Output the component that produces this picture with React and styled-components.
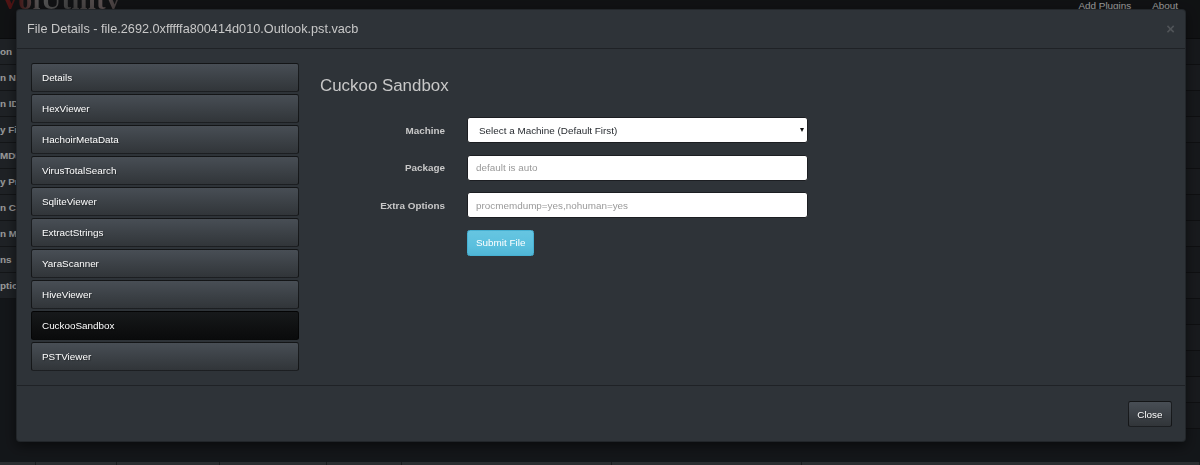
import React from "react";
import styled, { createGlobalStyle } from "styled-components";

const plugins = [
  "Details",
  "HexViewer",
  "HachoirMetaData",
  "VirusTotalSearch",
  "SqliteViewer",
  "ExtractStrings",
  "YaraScanner",
  "HiveViewer",
  "CuckooSandbox",
  "PSTViewer",
];

// what is left visible of the session table behind the modal
const sessionFields = [
  "on",
  "n Name",
  "n ID",
  "y File",
  "MD5",
  "y Profile",
  "n Created",
  "n Modified",
  "ns",
  "ption",
];

const GlobalStyle = createGlobalStyle`
  * {
    box-sizing: border-box;
  }
  html,
  body {
    margin: 0;
    height: 100%;
    overflow: hidden;
  }
  body {
    background: #21252a;
    color: #c8c8c8;
    font-family: "Liberation Sans", Arial, sans-serif;
    font-size: 9.9px;
  }
`;

const App = () => {
  return (
    <>
      <GlobalStyle />
      <Page>
        <Navbar>
          <Brand>
            <BrandText>VolUtility</BrandText>
          </Brand>
          <NavLinks>
            <NavLink>Add Plugins</NavLink>
            <NavLink>About</NavLink>
          </NavLinks>
        </Navbar>
        <Content>
          <Sidebar>
            {sessionFields.map((field) => (
              <SideRow key={field}>{field}</SideRow>
            ))}
          </Sidebar>
          <Main>
            {Array.from({ length: 15 }).map((_, i) => (
              <TableRow key={i} $odd={i % 2 === 1} />
            ))}
          </Main>
        </Content>
        <BottomBar>
          {[36, 81, 103, 107, 75, 210, 190, 398].map((w, i) => (
            <BottomCell key={i} style={{ width: w }} />
          ))}
        </BottomBar>
      </Page>

      <Backdrop />

      <ModalDialog>
        <ModalHeader>
          <ModalTitle>File Details - file.2692.0xfffffa800414d010.Outlook.pst.vacb</ModalTitle>
          <CloseX>×</CloseX>
        </ModalHeader>

        <ModalBody>
          <PluginList>
            {plugins.map((name) => (
              <PluginItem key={name} $active={name === "CuckooSandbox"}>
                {name}
              </PluginItem>
            ))}
          </PluginList>

          <Panel>
            <Heading>Cuckoo Sandbox</Heading>
            <Form>
              <Label>Machine</Label>
              <SelectWrap>
                <Select defaultValue="">
                  <option value="">Select a Machine (Default First)</option>
                </Select>
                <Caret />
              </SelectWrap>

              <Label>Package</Label>
              <Input placeholder="default is auto" />

              <Label>Extra Options</Label>
              <Input placeholder="procmemdump=yes,nohuman=yes" />

              <SubmitButton>Submit File</SubmitButton>
            </Form>
          </Panel>
        </ModalBody>

        <ModalFooter>
          <Button>Close</Button>
        </ModalFooter>
      </ModalDialog>
    </>
  );
};

/* page behind the modal */

const Page = styled.div`
  height: 100vh;
  display: flex;
  flex-direction: column;
`;

const Navbar = styled.div`
  height: 39px;
  flex-shrink: 0;
  display: flex;
  justify-content: space-between;
  align-items: flex-start;
  background: #1c1e21;
  border-bottom: 1px solid #121315;
`;

const Brand = styled.div`
  height: 10px;
  overflow: hidden;
  display: flex;
  align-items: flex-end;
`;

const BrandText = styled.span`
  display: block;
  font-family: "Liberation Serif", serif;
  font-weight: bold;
  font-size: 28px;
  line-height: 20px;
  letter-spacing: 0.5px;
  background: linear-gradient(
    90deg,
    #9a2222 0%,
    #6e1e1e 14%,
    #8c8c8c 32%,
    #686868 60%,
    #968484 85%,
    #625a5a 100%
  );
  -webkit-background-clip: text;
  background-clip: text;
  color: transparent;
`;

const NavLinks = styled.div`
  display: flex;
  gap: 21px;
  padding-right: 22px;
`;

const NavLink = styled.a`
  color: #fff;
  font-size: 9.9px;
  line-height: 12px;
`;

const Content = styled.div`
  flex: 1;
  min-height: 0;
  display: flex;
`;

const Sidebar = styled.div`
  width: 16px;
  flex-shrink: 0;
  display: flex;
  flex-direction: column;
  overflow: hidden;
`;

const SideRow = styled.div`
  height: 26px;
  line-height: 25px;
  font-weight: bold;
  color: #fff;
  white-space: nowrap;
  overflow: hidden;
  background: #33383e;
  border-bottom: 1px solid #202327;
`;

const Main = styled.div`
  flex: 1;
  display: flex;
  flex-direction: column;
`;

const TableRow = styled.div`
  height: 26px;
  flex-shrink: 0;
  background: ${(p) => (p.$odd ? "#292c31" : "#26292e")};
  border-bottom: 1px solid #191a1d;
`;

const BottomBar = styled.div`
  height: 3px;
  flex-shrink: 0;
  display: flex;
  background: #464b50;
`;

const BottomCell = styled.div`
  height: 100%;
  border-right: 1px solid #2c2f33;
`;

/* modal */

const Backdrop = styled.div`
  position: fixed;
  inset: 0;
  background: rgba(0, 0, 0, 0.4);
`;

const ModalDialog = styled.div`
  position: fixed;
  top: 9px;
  left: 16px;
  right: 14px;
  background: #2e3338;
  border: 1px solid rgba(0, 0, 0, 0.25);
  border-radius: 4px;
  box-shadow: 0 4px 12px rgba(0, 0, 0, 0.5);
`;

const ModalHeader = styled.div`
  display: flex;
  justify-content: space-between;
  align-items: center;
  padding: 10px 10px;
  border-bottom: 1px solid #1f2226;
`;

const ModalTitle = styled.h4`
  margin: 0;
  font-size: 12.7px;
  line-height: 18px;
  font-weight: normal;
  color: #c8c8c8;
`;

const CloseX = styled.button`
  padding: 0;
  border: 0;
  background: none;
  font-family: "Liberation Sans", Arial, sans-serif;
  font-size: 14.8px;
  font-weight: bold;
  line-height: 1;
  color: #505458;
  cursor: pointer;
`;

const ModalBody = styled.div`
  display: grid;
  grid-template-columns: 268px 1fr;
  column-gap: 21px;
  padding: 14px;
`;

const PluginList = styled.div`
  display: flex;
  flex-direction: column;
  gap: 2px;
`;

const PluginItem = styled.div`
  height: 29px;
  display: flex;
  align-items: center;
  padding: 0 10px;
  color: #fff;
  border: 1px solid rgba(0, 0, 0, 0.6);
  border-radius: 2.5px;
  text-shadow: 1px 1px 1px rgba(0, 0, 0, 0.3);
  background: ${(p) =>
    p.$active
      ? "linear-gradient(#17191b, #0f1011 60%, #0a0b0c)"
      : "linear-gradient(#484e55, #3a3f44 60%, #313539)"};
`;

const Panel = styled.div`
  display: flex;
  flex-direction: column;
`;

const Heading = styled.h3`
  margin: 14px 0 21.5px;
  font-size: 16.9px;
  line-height: 18.6px;
  font-weight: normal;
  color: #c8c8c8;
`;

const Form = styled.div`
  display: grid;
  grid-template-columns: 125px 341px;
  column-gap: 22px;
  row-gap: 11.5px;
  align-items: center;
`;

const Label = styled.label`
  text-align: right;
  font-weight: bold;
  color: #c8c8c8;
`;

const Input = styled.input`
  height: 26px;
  width: 100%;
  padding: 0 8px;
  border: 1px solid #1c1e22;
  border-radius: 3px;
  background: #fff;
  color: #272b30;
  font-family: inherit;
  font-size: 9.9px;
  outline: none;

  &::placeholder {
    color: #999;
  }
`;

const SelectWrap = styled.div`
  position: relative;
`;

const Select = styled.select`
  appearance: none;
  display: block;
  height: 26px;
  width: 100%;
  padding: 0 20px 0 11px;
  border: 1px solid #1c1e22;
  border-radius: 3px;
  background: #fff;
  color: #272b30;
  font-family: inherit;
  font-size: 9.9px;
  outline: none;
`;

const Caret = styled.span`
  position: absolute;
  right: 4px;
  top: 11px;
  width: 0;
  height: 0;
  border-left: 2.5px solid transparent;
  border-right: 2.5px solid transparent;
  border-top: 4px solid #111;
  pointer-events: none;
`;

const Button = styled.button`
  height: 26px;
  padding: 0 8.5px;
  border: 1px solid rgba(0, 0, 0, 0.6);
  border-radius: 2.5px;
  background: linear-gradient(#484e55, #3a3f44 60%, #313539);
  color: #fff;
  font-family: inherit;
  font-size: 9.9px;
  text-shadow: 1px 1px 1px rgba(0, 0, 0, 0.3);
  cursor: pointer;
`;

const SubmitButton = styled(Button)`
  grid-column: 2;
  justify-self: start;
  padding: 0 8px;
  border-color: #46b0d2;
  background: linear-gradient(#66c5e1, #5bc0de 60%, #50b6d6);
  text-shadow: none;
`;

const ModalFooter = styled.div`
  display: flex;
  justify-content: flex-end;
  padding: 15px 13px 14px;
  border-top: 1px solid #1f2226;
`;

export default App;
